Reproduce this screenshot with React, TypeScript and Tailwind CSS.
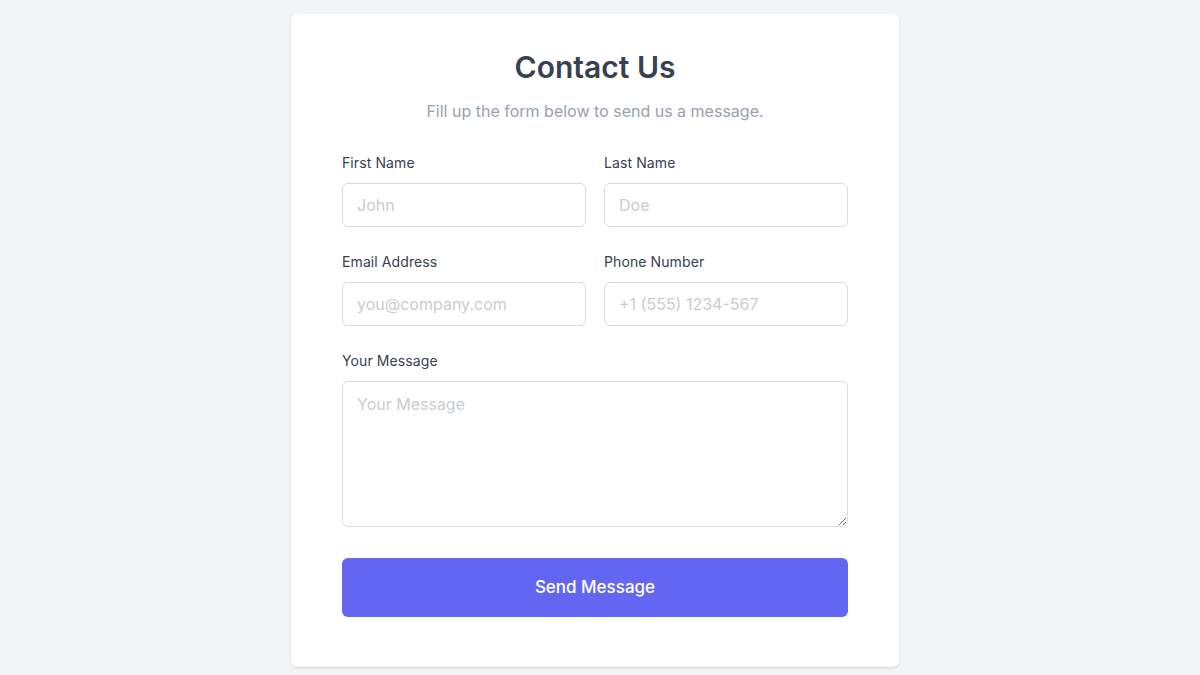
import React from 'react';

const inputClass =
  'w-full h-[44px] rounded-md border border-[#d8dbe0] bg-white px-[14px] text-[16px] text-gray-700 placeholder:text-[#c9ccd1] outline-none';

const Field: React.FC<{ label: string; placeholder: string; type?: string }> = ({ label, placeholder, type = 'text' }) => (
  <div className="flex flex-col">
    <label className="mb-[10px] text-[14px] leading-[20px] tracking-[0.1px] text-gray-700">{label}</label>
    <input type={type} placeholder={placeholder} className={inputClass} />
  </div>
);

const App: React.FC = () => {
  return (
    <div
      className="min-h-[675px] w-full bg-[#f3f4f6] flex justify-center pt-[14px] pr-[10px]"
      style={{ fontFamily: 'Inter, "Noto Sans", sans-serif' }}
    >
      <div className="w-[608px] h-[653px] bg-white rounded-md shadow-sm px-[51px] pt-[35px]">
        <h1 className="text-center text-[30px] leading-[36px] font-semibold text-[#374151]">Contact Us</h1>
        <p className="mt-[14px] text-center text-[16px] leading-[24px] text-gray-400">
          Fill up the form below to send us a message.
        </p>

        <form className="mt-[30px]" onSubmit={e => e.preventDefault()}>
          <div className="grid grid-cols-2 gap-x-[18px] gap-y-[25px]">
            <Field label="First Name" placeholder="John" />
            <Field label="Last Name" placeholder="Doe" />
            <Field label="Email Address" placeholder="you@company.com" type="email" />
            <Field label="Phone Number" placeholder="+1 (555) 1234-567" type="tel" />
          </div>

          <div className="mt-[25px] flex flex-col">
            <label className="mb-[10px] text-[14px] leading-[20px] tracking-[0.1px] text-gray-700">Your Message</label>
            <textarea
              placeholder="Your Message"
              className="w-full h-[146px] rounded-md border border-[#d8dbe0] bg-white px-[14px] py-[10px] text-[16px] text-gray-700 placeholder:text-[#c9ccd1] outline-none"
            />
          </div>

          <button
            type="submit"
            className="mt-[31px] w-full h-[59px] rounded-md bg-[#6366f1] text-white text-[17px] font-medium"
          >
            Send Message
          </button>
        </form>
      </div>
    </div>
  );
};

export default App;
